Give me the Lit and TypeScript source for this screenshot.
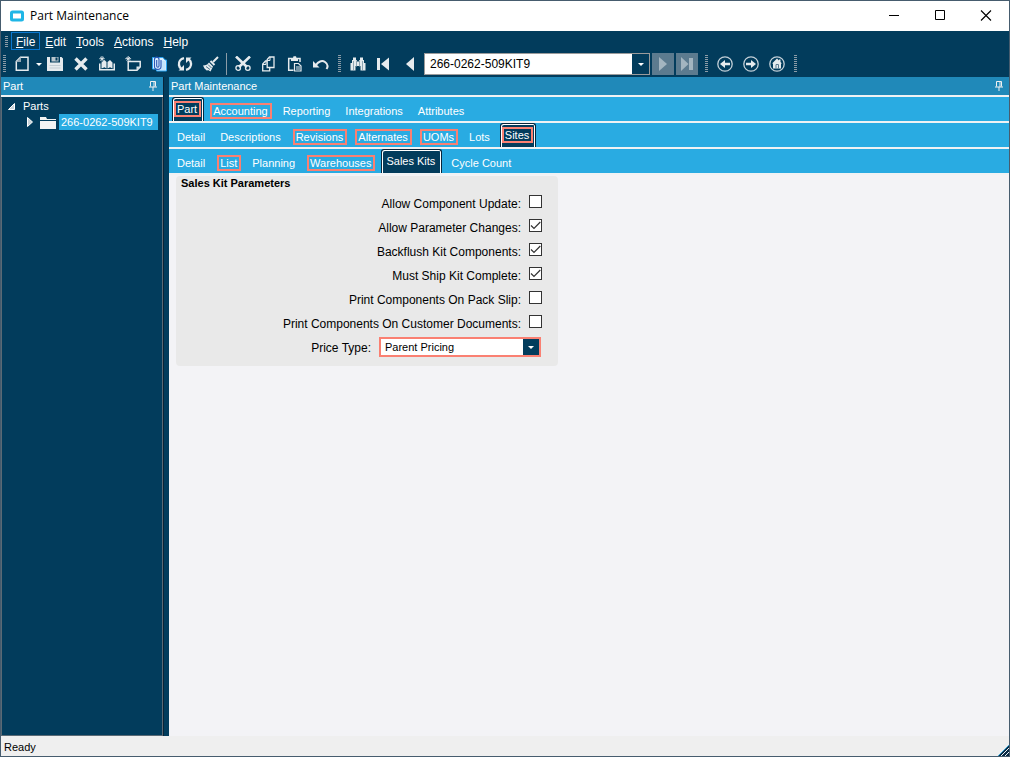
import { LitElement, html, css, svg } from "lit";
import { customElement, property } from "lit/decorators.js";
import { classMap } from "lit/directives/class-map.js";

const NAVY = "#023c5c";
const INK = "#e6ebee";

const icons: Record<string, unknown> = {
  new: svg`<path d="M5.500 1.200h7.500v13H1.300V5.500z" fill="none" stroke=${INK} stroke-width="1.500"/><path d="M1 6L6 1v5z" fill="#8fa5b2"/>`,
  save: svg`<path d="M0 1h3v5.500h10V1h1.500L16 2.500V15H0z" fill=${INK}/><path d="M4.500 1h7v4.500h-7z" fill="#b9c5cd"/><path d="M8.500 1.500h2v3h-2z" fill=${NAVY}/><path d="M2.500 9.500h11M2.500 12h11" stroke="#c3cdd4"/>`,
  delete: svg`<path d="M2.500 2.500l11 11M13.500 2.500l-11 11" stroke=${INK} stroke-width="3.400"/>`,
  binder: svg`<path d="M0 14.500V7.500h1.500V13h13V7.500H16v7z" fill=${INK}/><path d="M2.500 12.500V6.500L5.500 4 7.500 6v6.500l-2-1.300zM8.500 12.500V6l2.500-2 2.500 2.500v6l-2.500-1.300z" fill=${INK}/><path d="M3 0v5.500M.3 2.700h5.400M1.200 1l3.600 3.600M4.800 1L1.200 4.600" stroke=${INK} stroke-width=".9"/>`,
  tag: svg`<path d="M3.200 5.500h12v5.500L12 14.200H3.200z" fill="none" stroke=${INK} stroke-width="1.500"/><path d="M15 10.500h-3.500V14z" fill=${INK}/><path d="M3.200 0v6M.3 2.700h5.800M1.500 1l3.600 3.600M5 1L1.500 4.600" stroke=${INK} stroke-width=".9"/>`,
  attach: svg`<path d="M1.500 1.500H12L14 4h1.500v11h-10v-2h-4z" fill="#d9efff" stroke="#29a3f2"/><path d="M9.500 5h5v9h-5z" fill="#c4e4fb"/><path d="M5.700 4v6c0 1.600 2.300 1.600 2.300 0V3.500C8 .3 3.500.3 3.500 3.500v7c0 3.800 6.500 3.800 6.500 0V4" fill="none" stroke="#2c55b4" stroke-width="1.100"/>`,
  refresh: svg`<path d="M7 2.200C3.500 3 1.500 6 2 9c.2 1.500 1 2.700 2.200 3.600M9 13.800c3.500-.8 5.500-3.800 5-6.800-.2-1.500-1-2.700-2.200-3.600" fill="none" stroke=${INK} stroke-width="2.400"/><path d="M1.500 14.500h5.500V9zM14.500 1.500H9V7z" fill=${INK}/>`,
  brush: svg`<path d="M15 1l-5 5" stroke=${INK} stroke-width="2"/><path d="M7.500 5l4 4" stroke=${INK} stroke-width="2"/><path d="M6 6.500L10 10.500 7.500 15.500 5 14l-1 .8L1.500 12.500 0 9.500c3 0 4.500-1 6-3z" fill=${INK}/><path d="M3 10.500l4 3M5 8.500l3.500 3.500" stroke=${NAVY} stroke-width=".7"/>`,
  cut: svg`<path d="M1 .5L12 11M15 .5L4 11" stroke=${INK} stroke-width="2.600"/><circle cx="3.200" cy="12" r="2.300" fill="none" stroke=${INK} stroke-width="1.300"/><circle cx="12.800" cy="12" r="2.300" fill="none" stroke=${INK} stroke-width="1.300"/>`,
  copy: svg`<path d="M8.500 1H13v10.500H6.200V3.500z" fill="none" stroke=${INK} stroke-width="1.300"/><path d="M6 5H4.500L1.700 8v6.800h7V12" fill="none" stroke=${INK} stroke-width="1.300"/><path d="M6.200 4.500H9V1M1.700 8.500H5V5" fill="none" stroke=${INK}/>`,
  paste: svg`<path d="M6.500 14.300H1.700V2.500H13V6" fill="none" stroke=${INK} stroke-width="1.500"/><path d="M4 2h2l.5-1.800h2.500L9.500 2H11v3H4z" fill=${INK}/><path d="M7.500 7.500h4l2.500 2.500v5H7.500z" fill=${NAVY} stroke=${INK} stroke-width="1.200"/><path d="M9 11h4M9 13h4" stroke=${INK}/>`,
  undo: svg`<path d="M3 9C5 5.500 9 4 12 6c2.500 1.700 3.200 4.500 1.500 7" fill="none" stroke=${INK} stroke-width="2"/><path d="M0 5v6.500h6.500z" fill=${INK}/>`,
  find: svg`<path d="M3 1.500h3V4H3zM10 1.500h3V4h-3zM2 4h5v1.500h2V4h5v3h1.500v7.500h-5V10h-5v4.500h-5V7H2z" fill=${INK}/><path d="M3.500 5v9M12.500 5v9M6.500 4.500v6M9.500 4.500v6" stroke="#8fa5b2"/>`,
  first: svg`<path d="M1 2h3v12H1zM13 1.500v13L5 8z" fill=${INK}/>`,
  prev: svg`<path d="M12 1v14L4 8z" fill=${INK}/>`,
  next: svg`<path d="M4 1v14l8-7z" fill="#a3b5c0"/>`,
  last: svg`<path d="M2 1v14l7.500-7zM10 2h4v12h-4z" fill="#a3b5c0"/>`,
  back: svg`<circle cx="8" cy="8" r="7.200" fill="none" stroke="#c3d0d8" stroke-width="1.300"/><path d="M3 8l5-4v2.800h5v2.400H8V12z" fill=${INK}/>`,
  forward: svg`<circle cx="8" cy="8" r="7.200" fill="none" stroke="#c3d0d8" stroke-width="1.300"/><path d="M13 8L8 4v2.800H3v2.400h5V12z" fill=${INK}/>`,
  home: svg`<circle cx="8" cy="8" r="7.200" fill="none" stroke="#c3d0d8" stroke-width="1.300"/><path d="M8 2.500L3 7.500h1V12.500h8V7.500h1L11.500 6V3.500H10v1z" fill=${INK}/><path d="M7 12.500v-4h2.500v4" fill="none" stroke="#5c7b8f"/>`,
};

@customElement("tool-button")
class ToolButton extends LitElement {
  @property() icon = "";
  @property() label = "";
  @property({ type: Boolean, reflect: true }) boxed = false;

  static styles = css`
    :host { display: block; flex: none; }
    button { display: grid; place-items: center; width: 26px; height: 22px; margin: 0; padding: 0; border: 0; background: none; }
    :host([boxed]) button { width: 22px; background: #5c7b8f; }
    svg { display: block; width: 16px; height: 16px; }
  `;

  render() {
    return html`<button aria-label=${this.label} ?disabled=${this.boxed}><svg viewBox="0 0 16 16" aria-hidden="true">${icons[this.icon]}</svg></button>`;
  }
}

type Tab = { text: string; marked?: boolean; active?: boolean };

@customElement("tab-strip")
class TabStrip extends LitElement {
  @property({ attribute: false }) tabs: Tab[] = [];

  static styles = css`
    :host { display: block; background: #29abe2; border-bottom: 2px solid #f0f2f4; }
    .strip { display: flex; align-items: flex-end; height: 24px; padding-left: 1px; }
    button { display: flex; align-items: center; height: 20px; margin: 0; padding: 0 4px; border: 0; background: none; color: #fff; font: 11px/12px "Liberation Sans", Arial, sans-serif; white-space: nowrap; }
    .text { padding: 0 2px 0 1px; border: 2px solid transparent; height: 12px; }
    .marked { border-color: #fa8072; }
    .active { height: 24px; align-items: flex-start; padding: 3px 2px 0 1px; margin: 0 2px; background: #023c5c; border: 1px solid #06263c; border-bottom: 0; border-radius: 3px 3px 0 0; box-shadow: inset 1px 1px #fff, inset -1px 0 #fff; }
  `;

  render() {
    return html`<div class="strip" role="tablist">${this.tabs.map(
      (t) => html`<button role="tab" aria-selected=${t.active ? "true" : "false"} class=${classMap({ active: !!t.active })}>
        <span class=${classMap({ text: true, marked: !!t.marked })}>${t.text}</span></button>`
    )}</div>`;
  }
}

const pin = html`<svg class="pin" viewBox="0 0 8 10" aria-hidden="true"><path d="M1.500 5.500V.5h5v5M0 6h8M4 6v4M5 1v5" fill="none" stroke="#f0f0f0"/></svg>`;

@customElement("app-root")
class AppRoot extends LitElement {
  static styles = css`
    * { box-sizing: border-box; }
    :host { display: flex; flex-direction: column; min-height: 100vh; box-sizing: border-box; border: 1px solid #465c6e; background: #f3f3f6; color: #000; font: 12px/16px "Liberation Sans", Arial, sans-serif; }
    button { margin: 0; padding: 0; border: 0; background: none; color: inherit; font: inherit; }
    svg { display: block; }
    .titlebar { display: flex; align-items: center; height: 30px; background: #fff; padding-left: 9px; }
    .logo { width: 14px; height: 12px; margin-right: 6px; }
    .title { flex: 1; font: 12px/16px "Open Sans", "Noto Sans", sans-serif; margin: 0; }
    .win { display: grid; place-items: center; width: 46px; height: 30px; }
    .win svg { width: 12px; height: 12px; }
    .menubar { display: flex; height: 22px; padding: 1px 0 0 4px; background: #023c5c; color: #fff; }
    .grip { flex: none; width: 3px; height: 18px; background: repeating-linear-gradient(#8c9ca7 0 1px, transparent 1px 2px); }
    .menubar .grip { height: 12px; margin: 4px 3px 0 0; }
    .menu { height: 18px; padding: 1px 4px 0; line-height: 16px; border: 1px solid transparent; }
    .menu.open { border-color: #0a78d0; }
    u { text-underline-offset: 1px; }
    .toolbar { display: flex; align-items: center; gap: 4px; height: 24px; padding: 0 0 2px 2px; background: #023c5c; overflow: hidden; }
    .group { display: flex; }
    .drop { width: 6px; height: 22px; display: grid; place-items: center; }
    .drop svg { width: 6px; height: 3px; }
    .rule { width: 1px; height: 22px; background: #8c9ca7; margin: 0 -1px 0 -2px; }
    .combo { display: flex; width: 226px; height: 22px; margin: 0 2px 0 1px; border: 1px solid #9b9b9b; background: #fff; }
    .combo input { flex: 1; min-width: 0; margin: 0; padding: 0 5px; border: 0; background: none; font: inherit; color: #000; outline: 0; }
    .combo button { width: 17px; display: grid; place-items: center; background: #023c5c; }
    .combo svg { width: 6px; height: 3px; }
    .nav { display: flex; gap: 2px; margin-right: 3px; }
    .body { flex: 1; display: grid; grid-template-columns: 163px minmax(0, 1fr); column-gap: 5px; background: #023c5c; }
    .side { display: flex; flex-direction: column; border-right: 1px solid #0a2438; }
    .head { display: flex; align-items: center; justify-content: space-between; height: 20px; padding: 0 6px 0 2px; background: #2089b9; border-bottom: 2px solid #f0f2f4; color: #fff; font-size: 11px; line-height: 18px; font-weight: normal; margin: 0; }
    .pin { width: 8px; height: 10px; }
    .tree { flex: 1; margin: 0; padding: 0 0 0 6px; list-style: none; border: 1px solid #5a6a75; border-top-color: #023c5c; color: #fff; font-size: 11px; line-height: 16px; }
    .tree ul { margin: 0; padding: 0 0 0 19px; list-style: none; }
    .node { display: flex; align-items: center; height: 16px; }
    .node .tri { width: 7px; height: 7px; margin-right: 8px; }
    .node .arrow { width: 6px; height: 10px; margin-right: 7px; }
    .folder { width: 16px; height: 13px; margin-right: 3px; }
    .picked { background: #29abe2; padding: 0 5px 0 2px; }
    .main { background: #f3f3f6; }
    .panel { width: 382px; margin: 1px 0 0 7px; padding: 0 16px 6px 5px; border-radius: 4px; background: #e9e9e9; }
    .caption { margin: 0 0 2px; font-size: 11px; line-height: 14px; }
    .row { display: flex; justify-content: flex-end; align-items: center; gap: 8px; height: 24px; }
    .row label { line-height: 16px; }
    .check { appearance: none; flex: none; width: 13px; height: 13px; margin: 0 0 5px; border: 1px solid #333; background: #fff; }
    .check:checked { background: #fff url("data:image/svg+xml,%3Csvg xmlns='http://www.w3.org/2000/svg' viewBox='0 0 11 11'%3E%3Cpath d='M1 5.500l3 3L10.300 2' fill='none' stroke='%23333' stroke-width='1.200'/%3E%3C/svg%3E"); }
    .select { display: grid; grid-template-columns: 1fr 16px; width: 162px; height: 20px; margin: 0 1px 2px 0; border: 2px solid #fa8072; background: #fff; }
    .select select { grid-area: 1 / 1 / 2 / 3; appearance: none; margin: 0; padding: 0 16px 0 4px; border: 0; background: none; color: #000; font: 11px/16px "Liberation Sans", Arial, sans-serif; }
    .select .knob { grid-area: 1 / 2; display: grid; place-items: center; background: #023c5c; pointer-events: none; }
    .knob svg { width: 6px; height: 3px; }
    .status { display: flex; justify-content: space-between; align-items: flex-end; height: 20px; padding-left: 3px; background: #efefef; font-size: 11px; line-height: 18px; }
    .resize { width: 11px; height: 11px; }
  `;

  private tool(icon: string, label: string, boxed = false) {
    return html`<tool-button icon=${icon} label=${label} ?boxed=${boxed}></tool-button>`;
  }

  private check(id: string, label: string, on: boolean) {
    return html`<div class="row"><label for=${id}>${label}:</label><input class="check" type="checkbox" id=${id} ?checked=${on}></div>`;
  }

  render() {
    const down = html`<svg viewBox="0 0 6 3" aria-hidden="true"><path d="M0 0h6L3 3z" fill="#fff"/></svg>`;
    return html`
      <header class="titlebar">
        <svg class="logo" viewBox="0 0 14 12" aria-hidden="true"><rect x="1.500" y="2" width="11" height="8" rx="1" fill="none" stroke="#1fb6e6" stroke-width="3"/></svg>
        <h1 class="title">Part Maintenance</h1>
        <button class="win" aria-label="Minimize"><svg viewBox="0 0 12 12"><path d="M1 5.500h10" stroke="#000"/></svg></button>
        <button class="win" aria-label="Maximize"><svg viewBox="0 0 12 12"><path d="M1.500 .5h9v9h-9z" fill="none" stroke="#000"/></svg></button>
        <button class="win" aria-label="Close"><svg viewBox="0 0 12 12"><path d="M1 .5l10 10M11 .5l-10 10" stroke="#000" stroke-width="1.100"/></svg></button>
      </header>
      <nav class="menubar">
        <span class="grip"></span>
        ${["File", "Edit", "Tools", "Actions", "Help"].map(
          (m, i) => html`<button class=${classMap({ menu: true, open: i === 0 })}><u>${m[0]}</u>${m.slice(1)}</button>`
        )}
      </nav>
      <div class="toolbar">
        <span class="grip"></span>
        <div class="group">
          ${this.tool("new", "New")}
          <button class="drop" aria-label="New options">${down}</button>
          ${this.tool("save", "Save")}${this.tool("delete", "Delete")}${this.tool("binder", "Records")}${this.tool("tag", "Memo")}
          ${this.tool("attach", "Attachments")}${this.tool("refresh", "Refresh")}${this.tool("brush", "Clear")}
        </div>
        <span class="rule"></span>
        <div class="group">${this.tool("cut", "Cut")}${this.tool("copy", "Copy")}${this.tool("paste", "Paste")}${this.tool("undo", "Undo")}</div>
        <span class="grip"></span>
        <div class="group">
          ${this.tool("find", "Search")}${this.tool("first", "First")}${this.tool("prev", "Previous")}
          <div class="combo"><input aria-label="Part number" value="266-0262-509KIT9"><button aria-label="Show parts">${down}</button></div>
          <div class="nav">${this.tool("next", "Next", true)}${this.tool("last", "Last", true)}</div>
        </div>
        <span class="grip"></span>
        <div class="group">${this.tool("back", "Back")}${this.tool("forward", "Forward")}${this.tool("home", "Home")}</div>
        <span class="grip"></span>
      </div>
      <div class="body">
        <aside class="side">
          <h2 class="head">Part ${pin}</h2>
          <ul class="tree">
            <li>
              <div class="node"><svg class="tri" viewBox="0 0 7 7"><path d="M6.500 .5v6h-6z" fill="#c8d2d9" stroke="#fff"/></svg>Parts</div>
              <ul><li class="node">
                <svg class="arrow" viewBox="0 0 6 10"><path d="M.5 .5L5.500 5 .5 9.500z" fill="#c8d2d9" stroke="#fff"/></svg>
                <svg class="folder" viewBox="0 0 16 13"><path d="M0 1h6l1 2h9v1H0zM0 5h16v8H0z" fill="#f3f3f3"/></svg>
                <span class="picked">266-0262-509KIT9</span>
              </li></ul>
            </li>
          </ul>
        </aside>
        <main class="main">
          <h2 class="head">Part Maintenance ${pin}</h2>
          <tab-strip .tabs=${[
            { text: "Part", marked: true, active: true }, { text: "Accounting", marked: true },
            { text: "Reporting" }, { text: "Integrations" }, { text: "Attributes" },
          ]}></tab-strip>
          <tab-strip .tabs=${[
            { text: "Detail" }, { text: "Descriptions" }, { text: "Revisions", marked: true }, { text: "Alternates", marked: true },
            { text: "UOMs", marked: true }, { text: "Lots" }, { text: "Sites", marked: true, active: true },
          ]}></tab-strip>
          <tab-strip .tabs=${[
            { text: "Detail" }, { text: "List", marked: true }, { text: "Planning" }, { text: "Warehouses", marked: true },
            { text: "Sales Kits", active: true }, { text: "Cycle Count" },
          ]}></tab-strip>
          <section class="panel">
            <h2 class="caption">Sales Kit Parameters</h2>
            ${this.check("update", "Allow Component Update", false)}
            ${this.check("changes", "Allow Parameter Changes", true)}
            ${this.check("backflush", "Backflush Kit Components", true)}
            ${this.check("complete", "Must Ship Kit Complete", true)}
            ${this.check("slip", "Print Components On Pack Slip", false)}
            ${this.check("documents", "Print Components On Customer Documents", false)}
            <div class="row"><label for="price">Price Type:</label>
              <div class="select"><select id="price"><option>Parent Pricing</option></select><span class="knob">${down}</span></div>
            </div>
          </section>
        </main>
      </div>
      <footer class="status">Ready
        <svg class="resize" viewBox="0 0 11 11" aria-hidden="true"><path d="M11 0v11H0z" fill="#0a2a44"/><path d="M3 11l8-8M7 11l4-4" stroke="#e8f4fb"/><path d="M0 11L11 0" stroke="#29abe2" stroke-width=".8"/></svg>
      </footer>`;
  }
}
